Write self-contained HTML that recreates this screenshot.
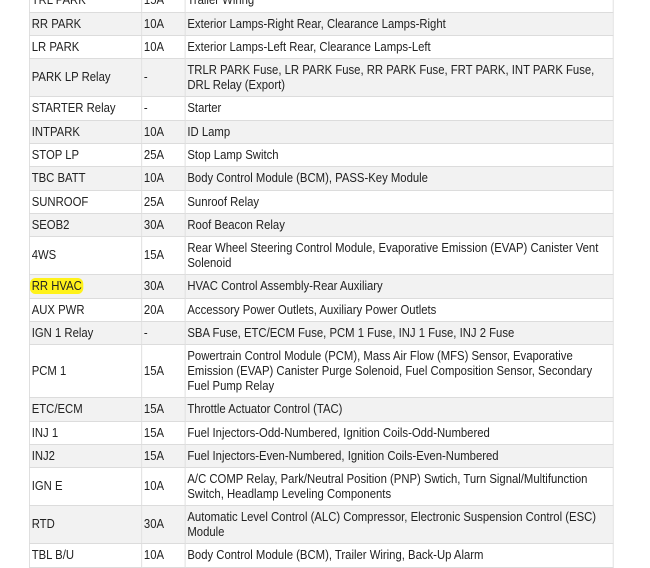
<!DOCTYPE html>
<html><head><style>
body{margin:0;background:#fff;width:650px;height:555px;overflow:hidden;position:relative;font-family:"Liberation Sans",Arial,sans-serif;font-size:12.5px;color:#222}
table{position:absolute;left:29px;top:-12px;border-collapse:collapse;width:646px;table-layout:fixed;transform:scaleX(0.905);transform-origin:0 0}
td{border:1px solid #dcdcdc;padding:0 2px 0 2px;line-height:15px;vertical-align:middle;white-space:nowrap;overflow:hidden}
tr.g td{background:#f2f2f2}
col.a{width:124px}col.b{width:48px}
.hl{background:#fff21a;border-radius:6px;padding:1px 2px;margin-left:-2px}
</style></head><body>
<table><colgroup><col class="a"><col class="b"><col></colgroup>
<tr style="height:24px"><td>TRL PARK</td><td>15A</td><td>Trailer Wiring</td></tr>
<tr class="g" style="height:23px"><td>RR PARK</td><td>10A</td><td>Exterior Lamps-Right Rear, Clearance Lamps-Right</td></tr>
<tr style="height:23px"><td>LR PARK</td><td>10A</td><td>Exterior Lamps-Left Rear, Clearance Lamps-Left</td></tr>
<tr class="g" style="height:38px"><td>PARK LP Relay</td><td>-</td><td>TRLR PARK Fuse, LR PARK Fuse, RR PARK Fuse, FRT PARK, INT PARK Fuse,<br>DRL Relay (Export)</td></tr>
<tr style="height:24px"><td>STARTER Relay</td><td>-</td><td>Starter</td></tr>
<tr class="g" style="height:23px"><td>INTPARK</td><td>10A</td><td>ID Lamp</td></tr>
<tr style="height:23px"><td>STOP LP</td><td>25A</td><td>Stop Lamp Switch</td></tr>
<tr class="g" style="height:24px"><td>TBC BATT</td><td>10A</td><td>Body Control Module (BCM), PASS-Key Module</td></tr>
<tr style="height:23px"><td>SUNROOF</td><td>25A</td><td>Sunroof Relay</td></tr>
<tr class="g" style="height:23px"><td>SEOB2</td><td>30A</td><td>Roof Beacon Relay</td></tr>
<tr style="height:38px"><td>4WS</td><td>15A</td><td>Rear Wheel Steering Control Module, Evaporative Emission (EVAP) Canister Vent<br>Solenoid</td></tr>
<tr class="g" style="height:24px"><td><span class="hl">RR HVAC</span></td><td>30A</td><td>HVAC Control Assembly-Rear Auxiliary</td></tr>
<tr style="height:23px"><td>AUX PWR</td><td>20A</td><td>Accessory Power Outlets, Auxiliary Power Outlets</td></tr>
<tr class="g" style="height:23px"><td>IGN 1 Relay</td><td>-</td><td>SBA Fuse, ETC/ECM Fuse, PCM 1 Fuse, INJ 1 Fuse, INJ 2 Fuse</td></tr>
<tr style="height:53px"><td>PCM 1</td><td>15A</td><td>Powertrain Control Module (PCM), Mass Air Flow (MFS) Sensor, Evaporative<br>Emission (EVAP) Canister Purge Solenoid, Fuel Composition Sensor, Secondary<br>Fuel Pump Relay</td></tr>
<tr class="g" style="height:24px"><td>ETC/ECM</td><td>15A</td><td>Throttle Actuator Control (TAC)</td></tr>
<tr style="height:23px"><td>INJ 1</td><td>15A</td><td>Fuel Injectors-Odd-Numbered, Ignition Coils-Odd-Numbered</td></tr>
<tr class="g" style="height:23px"><td>INJ2</td><td>15A</td><td>Fuel Injectors-Even-Numbered, Ignition Coils-Even-Numbered</td></tr>
<tr style="height:38px"><td>IGN E</td><td>10A</td><td>A/C COMP Relay, Park/Neutral Position (PNP) Swtich, Turn Signal/Multifunction<br>Switch, Headlamp Leveling Components</td></tr>
<tr class="g" style="height:38px"><td>RTD</td><td>30A</td><td>Automatic Level Control (ALC) Compressor, Electronic Suspension Control (ESC)<br>Module</td></tr>
<tr style="height:24px"><td>TBL B/U</td><td>10A</td><td>Body Control Module (BCM), Trailer Wiring, Back-Up Alarm</td></tr>
</table>
</body></html>
